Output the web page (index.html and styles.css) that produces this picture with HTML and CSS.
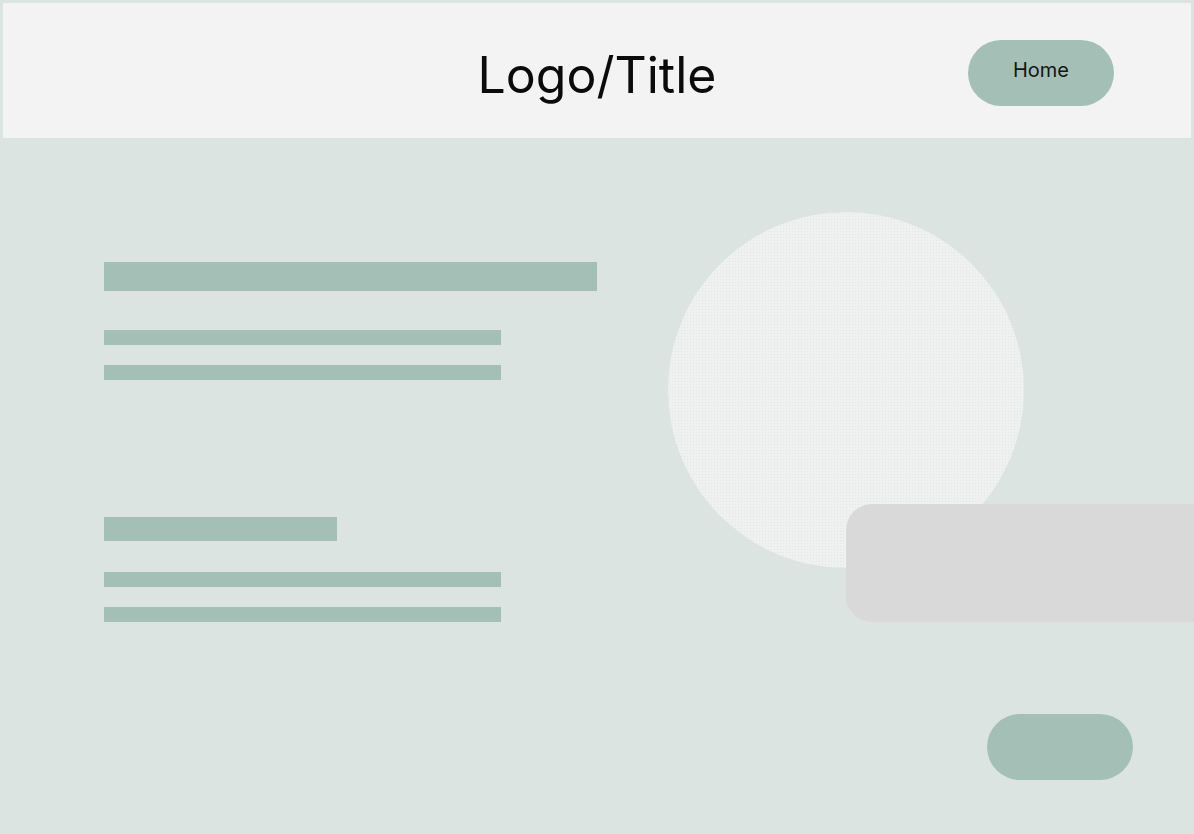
FILE: index.html
```html
<!DOCTYPE html>
<html lang="en">
<head>
<meta charset="utf-8">
<title>Logo/Title</title>
<link rel="stylesheet" href="styles.css">
</head>
<body>
<header class="topbar">
  <div class="spacer"></div>
  <h1 class="title">Logo/Title</h1>
  <a class="pill pill-home" href="#">Home</a>
</header>
<main class="hero">
  <div class="hero-row">
    <div class="copy">
      <div class="group">
        <div class="bar bar-lg"></div>
        <div class="line"></div>
        <div class="line"></div>
      </div>
      <div class="group group-2">
        <div class="bar bar-sm"></div>
        <div class="line"></div>
        <div class="line"></div>
      </div>
    </div>
    <div class="visual">
      <div class="circle"></div>
      <div class="card"></div>
    </div>
  </div>
  <div class="actions">
    <a class="pill pill-cta" href="#"></a>
  </div>
</main>
</body>
</html>
```

FILE: styles.css
```css
* { box-sizing: border-box; }
html, body {
  margin: 0;
  padding: 0;
  height: 100%;
}
body {
  background: #dbe4e1;
  font-family: Inter, "Noto Sans", sans-serif;
  overflow: hidden;
  width: 1194px;
  height: 834px;
}
.topbar {
  margin: 3px 3px 0 3px;
  height: 135px;
  background: #f3f3f3;
  display: grid;
  grid-template-columns: 1fr auto 1fr;
  align-items: center;
}
.title {
  margin: 9px 0 0 0;
  font-size: 50px;
  font-weight: 400;
  line-height: 1;
  color: #0b0b0b;
  letter-spacing: 0;
}
.pill {
  display: flex;
  align-items: center;
  justify-content: center;
  width: 146px;
  height: 66px;
  border-radius: 33px;
  background: #a4bfb6;
  color: #151515;
  text-decoration: none;
}
.pill-home {
  justify-self: end;
  margin: 5px 77px 0 0;
  font-size: 20px;
  padding-bottom: 7px;
}
.hero {
  display: flex;
  flex-direction: column;
}
.hero-row {
  display: flex;
  align-items: flex-start;
}
.copy {
  padding: 124px 0 0 104px;
  width: 597px;
}
.group {
  display: flex;
  flex-direction: column;
}
.group-2 {
  margin-top: 137px;
}
.bar, .line {
  background: #a4bfb6;
}
.bar-lg {
  width: 493px;
  height: 29px;
  margin-bottom: 39px;
}
.bar-sm {
  width: 233px;
  height: 24px;
  margin-bottom: 31px;
}
.line {
  width: 397px;
  height: 15px;
}
.line + .line {
  margin-top: 20px;
}
.visual {
  position: relative;
  margin: 74px 0 0 71px;
  width: 356px;
  height: 356px;
}
.circle {
  width: 356px;
  height: 356px;
  border-radius: 50%;
  background-color: #eff1f0;
  background-image: radial-gradient(circle, rgba(200, 212, 208, 0.35) 0.6px, transparent 0.9px);
  background-size: 3px 3px;
}
.card {
  position: absolute;
  left: 178px;
  top: 292px;
  width: 348px;
  height: 118px;
  border-radius: 26px 0 0 26px;
  background: #d9d9d9;
}
.actions {
  display: flex;
  justify-content: flex-end;
  margin-top: 92px;
  padding-right: 61px;
}
```
